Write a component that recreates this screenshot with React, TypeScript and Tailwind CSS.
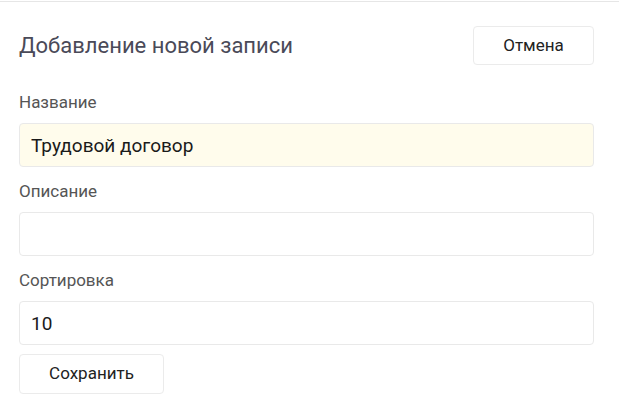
const font = { fontFamily: "Roboto, 'Noto Sans', sans-serif" };

const input =
  "h-[44px] w-full rounded-[4px] border border-[#e9e9e9] px-[11px] text-[19px] text-[#1a1a1a] outline-none";

function Field({
  label,
  value,
  highlight,
}: {
  label: string;
  value: string;
  highlight?: boolean;
}) {
  return (
    <div>
      <div className="mb-[9px] text-[17px] leading-[24px] text-[#555555]">{label}</div>
      <input
        readOnly
        value={value}
        className={`${input} ${highlight ? "bg-[#fffcec]" : "bg-white"}`}
        style={font}
      />
    </div>
  );
}

export default function App() {
  return (
    <main className="min-h-screen bg-white" style={font}>
      <div className="h-[1px]" />
      <div className="h-[1px] bg-[#e6e6e6]" />
      <div className="pl-[19px] pr-[25px]">
        <div className="mt-[24px] flex items-center justify-between">
          <div className="text-[22px] leading-[28px] text-[#4a4a58]">
            Добавление новой записи
          </div>
          <button className="h-[39px] w-[121px] rounded-[4px] border border-[#ebebeb] bg-white text-[17px] text-[#222222]">
            Отмена
          </button>
        </div>

        <div className="mt-[25px] flex flex-col gap-[12px]">
          <Field label="Название" value="Трудовой договор" highlight />
          <Field label="Описание" value="" />
          <Field label="Сортировка" value="10" />
        </div>

        <button className="mt-[9px] h-[40px] w-[145px] rounded-[4px] border border-[#ebebeb] bg-white text-[17px] text-[#222222]">
          Сохранить
        </button>
      </div>
    </main>
  );
}
